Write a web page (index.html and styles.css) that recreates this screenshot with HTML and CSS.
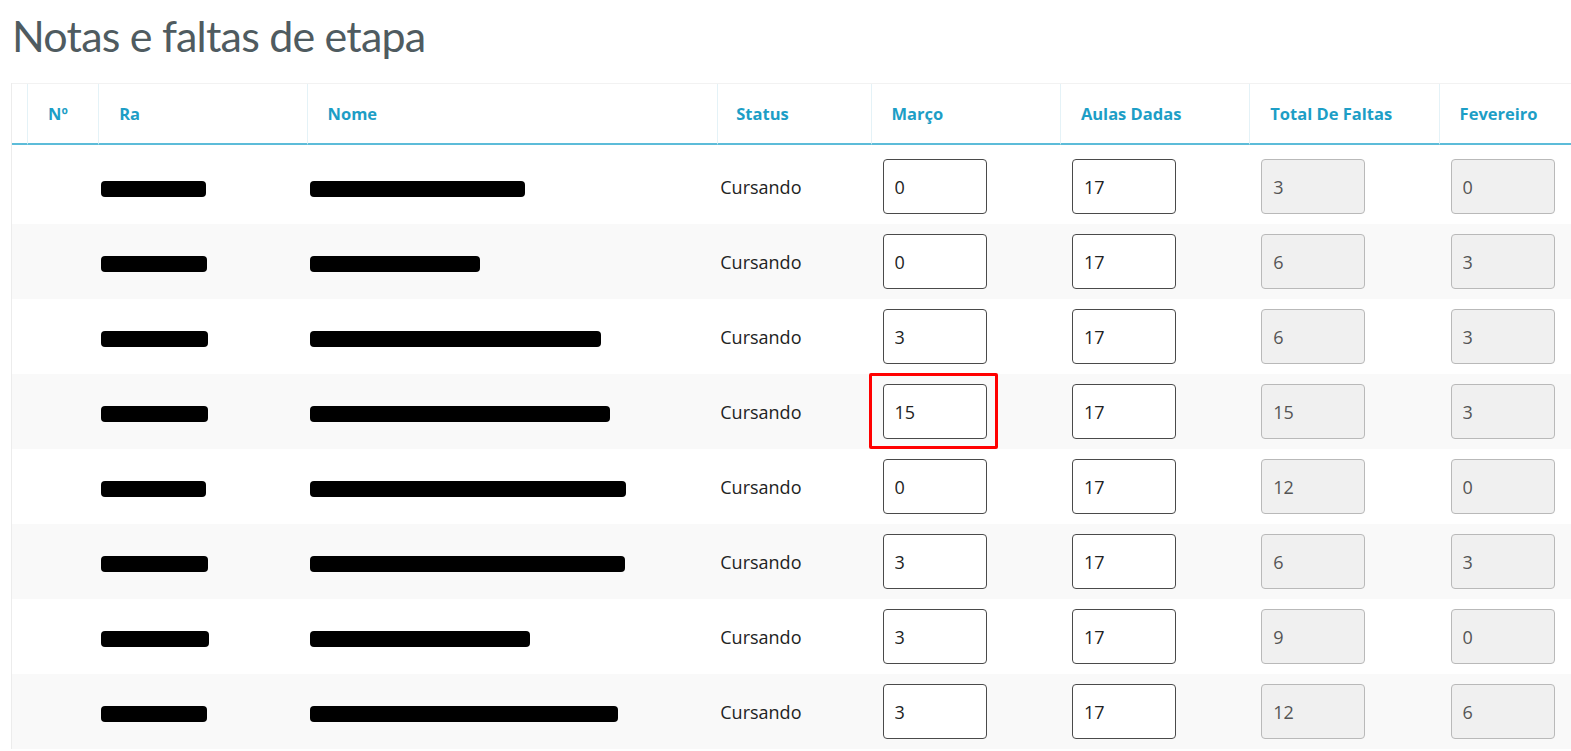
FILE: index.html
```html
<!DOCTYPE html>
<html lang="pt-BR">
<head>
  <meta charset="UTF-8">
  <meta name="viewport" content="width=device-width, initial-scale=1.0">
  <title>Notas e faltas de etapa</title>
  <link rel="stylesheet" href="styles.css">
</head>
<body>
  <div class="page">
    <h1 class="title">Notas e faltas de etapa</h1>

    <div class="table-wrap">
      <table class="grades">
        <thead>
          <tr>
            <th class="col-sel"></th>
            <th class="col-num">Nº</th>
            <th class="col-ra">Ra</th>
            <th class="col-nome">Nome</th>
            <th class="col-status">Status</th>
            <th class="col-mes">Março</th>
            <th class="col-mes">Aulas Dadas</th>
            <th class="col-mes">Total De Faltas</th>
            <th class="col-mes">Fevereiro</th>
          </tr>
        </thead>
        <tbody>
          <tr>
            <td></td><td></td>
            <td><span class="redact" style="width:105px"></span></td>
            <td><span class="redact" style="width:215px"></span></td>
            <td>Cursando</td>
            <td><input class="num" type="text" value="0"></td>
            <td><input class="num" type="text" value="17"></td>
            <td><input class="num" type="text" value="3" readonly></td>
            <td><input class="num" type="text" value="0" readonly></td>
          </tr>
          <tr>
            <td></td><td></td>
            <td><span class="redact" style="width:106px"></span></td>
            <td><span class="redact" style="width:170px"></span></td>
            <td>Cursando</td>
            <td><input class="num" type="text" value="0"></td>
            <td><input class="num" type="text" value="17"></td>
            <td><input class="num" type="text" value="6" readonly></td>
            <td><input class="num" type="text" value="3" readonly></td>
          </tr>
          <tr>
            <td></td><td></td>
            <td><span class="redact" style="width:107px"></span></td>
            <td><span class="redact" style="width:291px"></span></td>
            <td>Cursando</td>
            <td><input class="num" type="text" value="3"></td>
            <td><input class="num" type="text" value="17"></td>
            <td><input class="num" type="text" value="6" readonly></td>
            <td><input class="num" type="text" value="3" readonly></td>
          </tr>
          <tr>
            <td></td><td></td>
            <td><span class="redact" style="width:107px"></span></td>
            <td><span class="redact" style="width:300px"></span></td>
            <td>Cursando</td>
            <td class="marked"><input class="num" type="text" value="15"></td>
            <td><input class="num" type="text" value="17"></td>
            <td><input class="num" type="text" value="15" readonly></td>
            <td><input class="num" type="text" value="3" readonly></td>
          </tr>
          <tr>
            <td></td><td></td>
            <td><span class="redact" style="width:105px"></span></td>
            <td><span class="redact" style="width:316px"></span></td>
            <td>Cursando</td>
            <td><input class="num" type="text" value="0"></td>
            <td><input class="num" type="text" value="17"></td>
            <td><input class="num" type="text" value="12" readonly></td>
            <td><input class="num" type="text" value="0" readonly></td>
          </tr>
          <tr>
            <td></td><td></td>
            <td><span class="redact" style="width:107px"></span></td>
            <td><span class="redact" style="width:315px"></span></td>
            <td>Cursando</td>
            <td><input class="num" type="text" value="3"></td>
            <td><input class="num" type="text" value="17"></td>
            <td><input class="num" type="text" value="6" readonly></td>
            <td><input class="num" type="text" value="3" readonly></td>
          </tr>
          <tr>
            <td></td><td></td>
            <td><span class="redact" style="width:108px"></span></td>
            <td><span class="redact" style="width:220px"></span></td>
            <td>Cursando</td>
            <td><input class="num" type="text" value="3"></td>
            <td><input class="num" type="text" value="17"></td>
            <td><input class="num" type="text" value="9" readonly></td>
            <td><input class="num" type="text" value="0" readonly></td>
          </tr>
          <tr>
            <td></td><td></td>
            <td><span class="redact" style="width:106px"></span></td>
            <td><span class="redact" style="width:308px"></span></td>
            <td>Cursando</td>
            <td><input class="num" type="text" value="3"></td>
            <td><input class="num" type="text" value="17"></td>
            <td><input class="num" type="text" value="12" readonly></td>
            <td><input class="num" type="text" value="6" readonly></td>
          </tr>
        </tbody>
      </table>
    </div>
  </div>
</body>
</html>
```

FILE: styles.css
```css
html, body {
  margin: 0;
  padding: 0;
  background: #fff;
  overflow: hidden;
}

body {
  font-family: "Open Sans", "Lato", Arial, sans-serif;
  color: #222;
}

.page {
  padding-left: 11px;
}

.title {
  margin: 0;
  padding: 10px 0 0 1px;
  height: 83px;
  box-sizing: border-box;
  font-family: "Lato", "Open Sans", sans-serif;
  font-weight: 400;
  font-size: 43px;
  color: #4f5b60;
  letter-spacing: -0.8px;
}

.table-wrap {
  overflow: hidden;
  width: calc(100vw - 11px);
  border-left: 1px solid #ececec;
}

.grades {
  border-collapse: separate;
  border-spacing: 0;
  table-layout: fixed;
  width: 1616px;
  border-top: 1px solid #f2f2f2;
}

/* header */
.grades th {
  height: 59px;
  padding: 0 0 0 20px;
  text-align: left;
  vertical-align: middle;
  font-size: 16.5px;
  font-weight: 700;
  color: #1d9ec6;
  border-left: 1px solid #e4f2f7;
  border-bottom: 2px solid #5cbcd9;
  white-space: nowrap;
}

.grades th.col-sel {
  border-left: none;
  width: 15px;
  padding: 0;
}

.col-num { width: 50px; }
.col-ra { width: 187px; }
.col-nome { width: 389px; }
.grades th.col-status { padding-left: 18px; width: 134px; }
.col-mes { width: 168px; }

/* body */
.grades td {
  height: 55px;
  padding: 10px 0 10px 3px;
  vertical-align: middle;
  font-size: 18px;
  white-space: nowrap;
}

.grades tbody tr:first-child td {
  padding-top: 14px;
}

.grades tbody tr:nth-child(even) td {
  background: #f9f9f9;
}

.redact {
  display: inline-block;
  height: 16px;
  background: #000;
  border-radius: 4px;
  vertical-align: middle;
}

.num {
  display: block;
  box-sizing: border-box;
  width: 104px;
  height: 55px;
  margin-left: 9px;
  padding: 0 11px;
  border: 1px solid #4a4a4a;
  border-radius: 4px;
  background: #fff;
  font-family: "Open Sans", "Lato", Arial, sans-serif;
  font-size: 18px;
  color: #222;
}

.num[readonly] {
  background: #f0f0f0;
  border-color: #b9b9b9;
  color: #555;
}

/* annotation around the highlighted field */
.marked {
  position: relative;
}

.marked::after {
  content: '';
  position: absolute;
  left: -2px;
  top: -1px;
  width: 129px;
  height: 76px;
  box-sizing: border-box;
  border: 3px solid #f00;
  border-radius: 2px;
}
```
